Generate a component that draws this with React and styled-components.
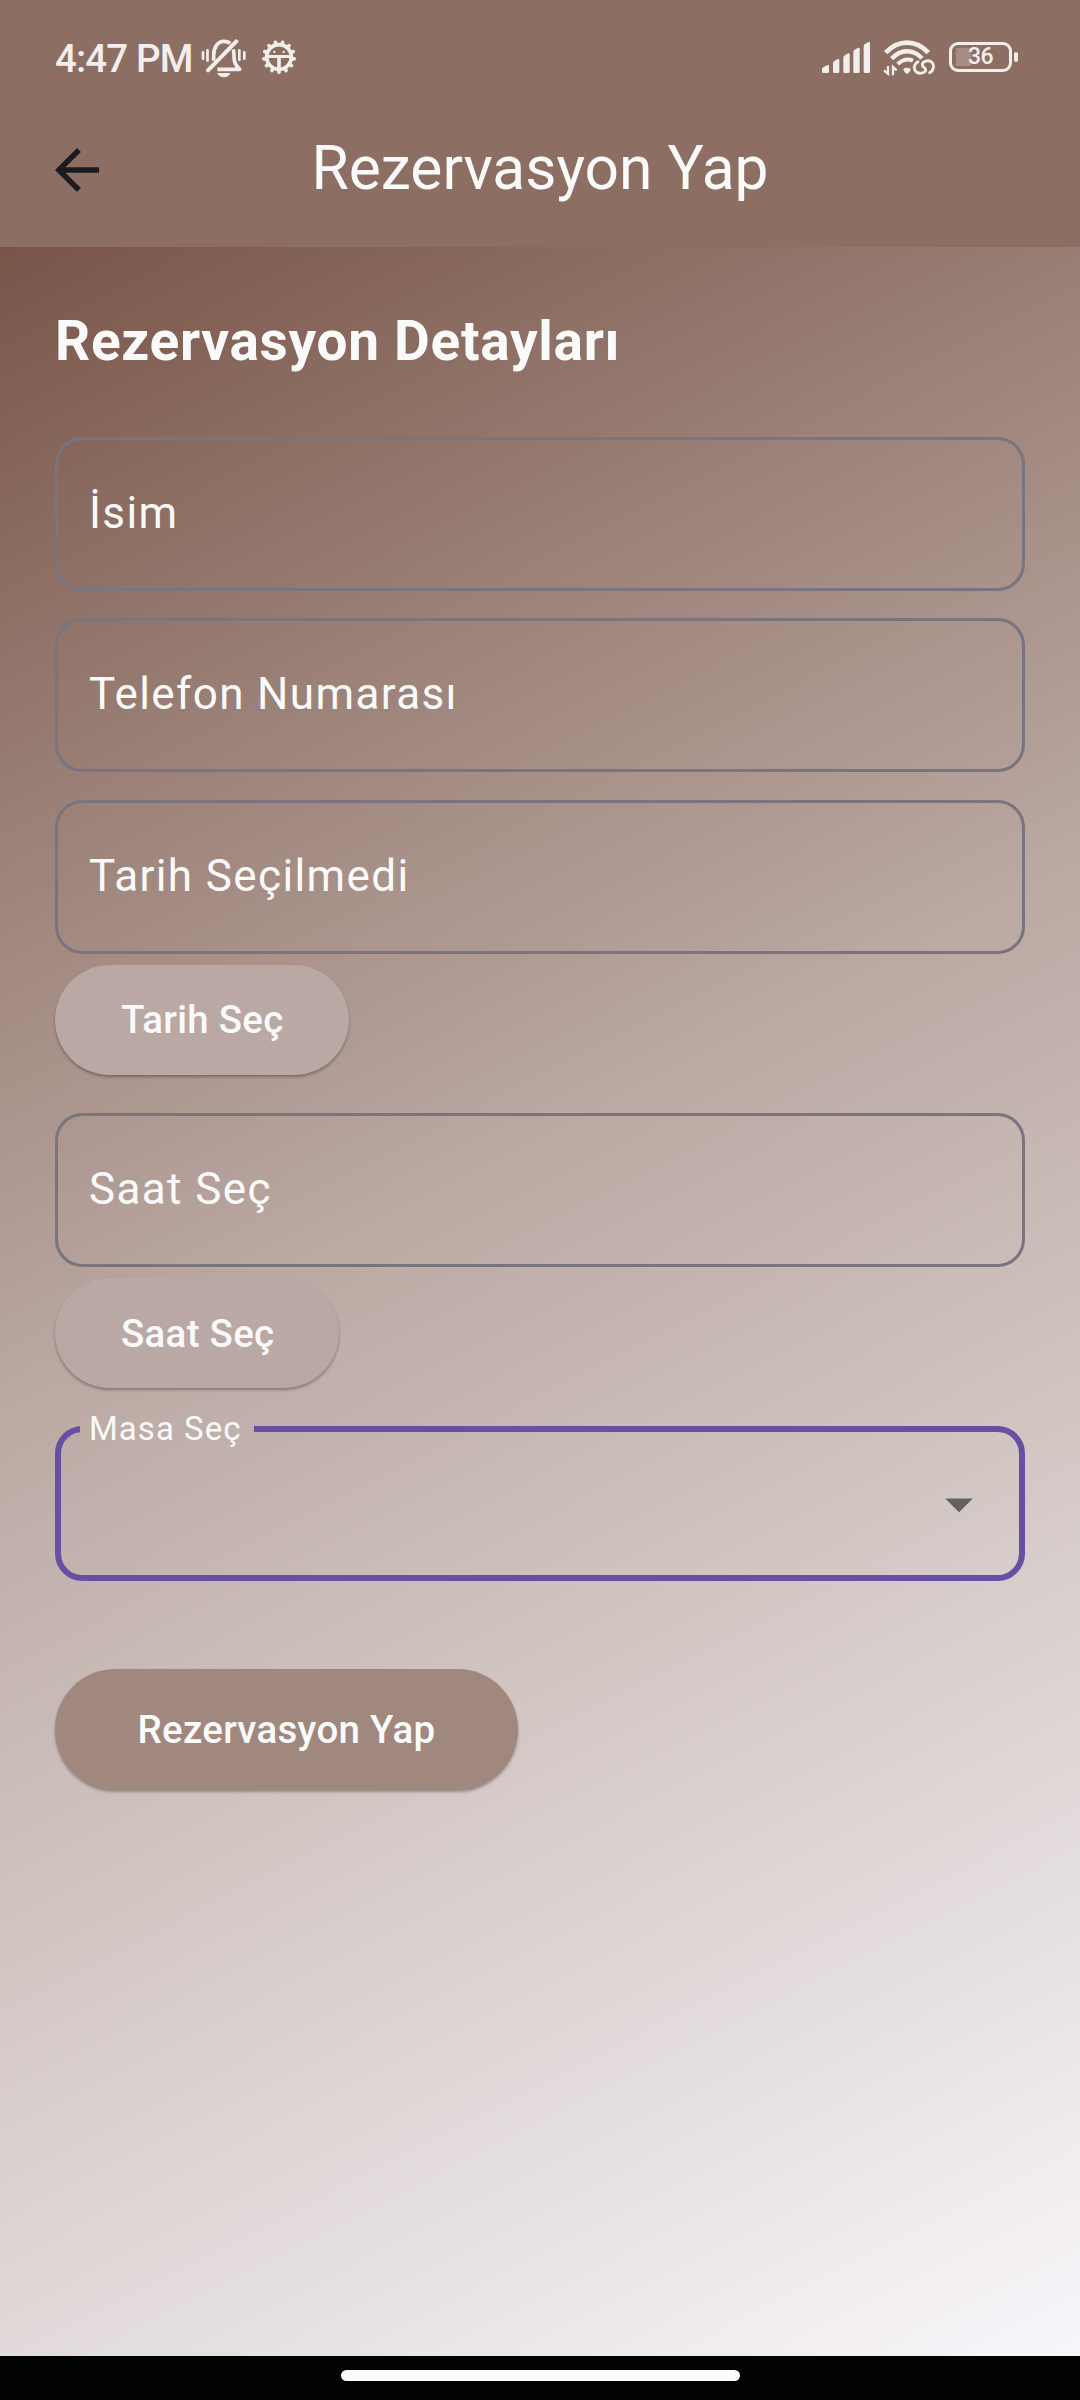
import React from "react";
import styled, { createGlobalStyle } from "styled-components";

const Global = createGlobalStyle`
  *, *::before, *::after { box-sizing: border-box; }
  body { margin: 0; background: #000; }
  button, fieldset, h1, h2, legend { margin: 0; padding: 0; border: 0; font: inherit; }
`;

const Screen = styled.div`
  width: 1080px;
  height: 2400px;
  display: flex;
  flex-direction: column;
  font-family: Roboto, "Noto Sans", sans-serif;
  color: #fafafa;
  overflow: hidden;
`;

const Header = styled.header`
  height: 247px;
  flex: none;
  background: #8d6e63;
`;

const StatusBar = styled.div`
  height: 93px;
  padding: 0 62px 0 55px;
  display: flex;
  justify-content: space-between;
  color: #f2eeec;
`;

const StatusGroup = styled.div`
  display: flex;
  align-items: flex-start;
`;

const Clock = styled.span`
  width: 146px;
  margin-top: 36px;
  font-size: 38.5px;
  line-height: 45px;
  font-weight: 500;
  letter-spacing: -0.85px;
  white-space: nowrap;
`;

const Glyph = styled.svg`
  display: block;
  flex: none;
  width: ${(p) => p.$w}px;
  height: ${(p) => p.$h}px;
  margin: ${(p) => p.$top || 0}px ${(p) => p.$right || 0}px 0 0;
`;

const Battery = styled.div`
  margin-top: 42px;
  display: flex;
  align-items: center;
  gap: 2px;
`;

const Cell = styled.div`
  width: 63px;
  height: 30px;
  border: 3.5px solid #f2eeec;
  border-radius: 9px;
  display: flex;
  align-items: center;
  justify-content: center;
  font-size: 23px;
  line-height: 24px;
  font-weight: 500;
  letter-spacing: -0.6px;
  background: linear-gradient(rgba(255, 255, 255, 0.22), rgba(255, 255, 255, 0.22)) 4px 3px / 15px 18px no-repeat;
`;

const Nub = styled.div`
  width: 4px;
  height: 10px;
  border-radius: 2px;
  background: #f2eeec;
`;

const AppBar = styled.div`
  height: 154px;
  padding: 0 44px;
  display: grid;
  grid-template-columns: 66px 1fr 66px;
  align-items: center;
`;

const BackButton = styled.button`
  width: 66px;
  height: 66px;
  background: none;
  color: #1d1b20;
`;

const Title = styled.h1`
  text-align: center;
  font-size: 60.5px;
  line-height: 77px;
  font-weight: 400;
  padding-bottom: 3px;
`;

const Content = styled.main`
  flex: 1;
  padding: 55px;
  display: flex;
  flex-direction: column;
  align-items: flex-start;
  background: linear-gradient(
    152.87deg,
    #795548 0%,
    #9f867d 25%,
    #bba9a3 44%,
    #d9cfcd 71%,
    #f8f6fb 100%
  );
`;

const Heading = styled.h2`
  height: 79px;
  font-size: 55px;
  line-height: 79px;
  font-weight: 700;
  letter-spacing: 0.69px;
`;

const Field = styled.div`
  width: 970px;
  height: 154px;
  margin-top: ${(p) => p.$gap || 27.5}px;
  padding: 0 31px 2px;
  display: flex;
  align-items: center;
  border: 3px solid #79747e;
  border-radius: 27.5px;
  font-size: 44px;
  letter-spacing: 1.375px;
`;

const Pill = styled.button`
  height: ${(p) => (p.$large ? 121 : 110)}px;
  margin-top: ${(p) => (p.$large ? 87.5 : 11)}px;
  margin-bottom: ${(p) => (p.$large ? 0 : 11)}px;
  padding: 0 ${(p) => (p.$large ? "82px 0 82.5px" : "65px 0 66px")};
  border-radius: 61px;
  background: ${(p) => (p.$large ? "#a1887f" : "#b9a8a4")};
  color: #fafafa;
  font-size: 38.5px;
  line-height: 55px;
  font-weight: 500;
  letter-spacing: 0.275px;
  box-shadow: 0 2px 3px rgba(0, 0, 0, 0.3);
`;

const Select = styled.fieldset`
  width: 970px;
  height: 172px;
  min-width: 0;
  margin-top: 10px;
  padding: 0 27px 0 19px;
  border: 6px solid #6750a4;
  border-radius: 27.5px;
`;

const Legend = styled.legend`
  width: 174px;
  height: 39px;
  padding-left: 9px;
  font-size: 33px;
  line-height: 39px;
  letter-spacing: 1.03px;
  white-space: nowrap;
`;

const SelectValue = styled.div`
  height: 112px;
  display: flex;
  align-items: center;
  justify-content: flex-end;
  color: #616161;
`;

const NavBar = styled.div`
  height: 44px;
  flex: none;
  background: #020202;
  display: flex;
  justify-content: center;
  padding-top: 14px;
`;

const HomeHandle = styled.div`
  width: 399px;
  height: 11px;
  border-radius: 6px;
  background: #fcfcfc;
`;

const TOOTH_COUNT = 13;
const teeth = Array.from({ length: TOOTH_COUNT }, (_, i) => 180 + (i * 360) / TOOTH_COUNT);

function MutedBell() {
  return (
    <Glyph $w={45} $h={39} $top={39} $right={16} viewBox="511 56 135 117" fill="none" stroke="currentColor" strokeWidth="11">
      <path d="M549 121V105C549 80 562 63 580 63C588 63 594 65 599 69" />
      <path d="M532 150L617 63" strokeWidth="12" strokeLinecap="round" />
      <path d="M608 87C610 95 610 101 610 109C610 127 615 134 627 147H560" strokeLinejoin="round" />
      <path d="M559 158H599C596 167 589 171 580 171S563 167 559 158Z" fill="currentColor" stroke="none" />
      <path d="M517 96V115M530.500 90V121M626 90V119M641 96V115" strokeWidth="8" strokeLinecap="round" />
    </Glyph>
  );
}

function GearFace() {
  return (
    <Glyph $w={34} $h={34} $top={39.5} viewBox="-51 -51 102 102">
      <g fill="currentColor">
        {teeth.map((a) => (
          <rect key={a} x="-5.500" y="-51" width="11" height="16" rx="5" transform={`rotate(${a})`} />
        ))}
        <circle cx="-14" cy="-15" r="3.500" />
        <circle cx="14" cy="-15" r="3.500" />
        <rect x="-36" y="-6" width="72" height="9" />
        <rect x="-5.500" y="0" width="11" height="36" />
      </g>
      <circle r="37" fill="none" stroke="currentColor" strokeWidth="11" />
    </Glyph>
  );
}

function Signal() {
  return (
    <Glyph $w={49} $h={31} $top={42} $right={12} viewBox="66 66 147 93" fill="currentColor">
      <path d="M66 147Q67 144 70 142L81 136Q87 133 87 138V155Q87 159 83 159H70Q66 159 66 155Z" />
      <path d="M99 130Q99 126 102 124L112 118Q118 115 118 120V155Q118 159 114 159H103Q99 159 99 155Z" />
      <path d="M130 114Q130 109 133 107L142 101Q149 98 149 103V155Q149 159 145 159H134Q130 159 130 155Z" />
      <path d="M160 98Q160 92 163 90L173 84Q179 81 179 86V155Q179 159 175 159H164Q160 159 160 155Z" />
      <path d="M191 80Q191 75 194 73L204 67Q210 64 210 69V155Q210 159 206 159H195Q191 159 191 155Z" />
    </Glyph>
  );
}

function Wifi() {
  return (
    <Glyph $w={52} $h={36} $top={40} $right={14} viewBox="248 60 156 108" fill="none" stroke="currentColor">
      <path d="M256 98C294 58 346 58 384 98" strokeWidth="14" />
      <path d="M274 116C301 87 338 86 365 115" strokeWidth="13" />
      <path d="M292 132C307 118 323 115 338 122" strokeWidth="12" />
      <path d="M309 147Q319 139 331 147Q331 155 320 162Q309 155 309 147Z" fill="currentColor" stroke="none" />
      <path d="M263 138V161L251 151M278 166V141L289 151" strokeWidth="7" />
      <path
        d="M353 125C341 131 338 148 348 156C359 164 377 158 376 149C375 142 366 142 366 134C366 124 384 118 394 126C403 134 401 151 388 158"
        strokeWidth="8.500"
        strokeLinecap="round"
      />
    </Glyph>
  );
}

export default function App() {
  return (
    <Screen>
      <Global />
      <Header>
        <StatusBar>
          <StatusGroup>
            <Clock>4:47 PM</Clock>
            <MutedBell />
            <GearFace />
          </StatusGroup>
          <StatusGroup>
            <Signal />
            <Wifi />
            <Battery>
              <Cell>36</Cell>
              <Nub />
            </Battery>
          </StatusGroup>
        </StatusBar>
        <AppBar>
          <BackButton aria-label="Geri">
            <Glyph $w={66} $h={66} viewBox="0 0 24 24" fill="currentColor">
              <path d="M20 11H7.830l5.590-5.590L12 4l-8 8 8 8 1.410-1.410L7.830 13H20v-2z" />
            </Glyph>
          </BackButton>
          <Title>Rezervasyon Yap</Title>
        </AppBar>
      </Header>
      <Content>
        <Heading>Rezervasyon Detayları</Heading>
        <Field $gap={55.5}>İsim</Field>
        <Field>Telefon Numarası</Field>
        <Field>Tarih Seçilmedi</Field>
        <Pill>Tarih Seç</Pill>
        <Field>Saat Seç</Field>
        <Pill>Saat Seç</Pill>
        <Select>
          <Legend>Masa Seç</Legend>
          <SelectValue>
            <Glyph $w={66} $h={66} viewBox="0 0 24 24" fill="currentColor">
              <path d="M7 10l5 5 5-5z" />
            </Glyph>
          </SelectValue>
        </Select>
        <Pill $large>Rezervasyon Yap</Pill>
      </Content>
      <NavBar>
        <HomeHandle />
      </NavBar>
    </Screen>
  );
}
